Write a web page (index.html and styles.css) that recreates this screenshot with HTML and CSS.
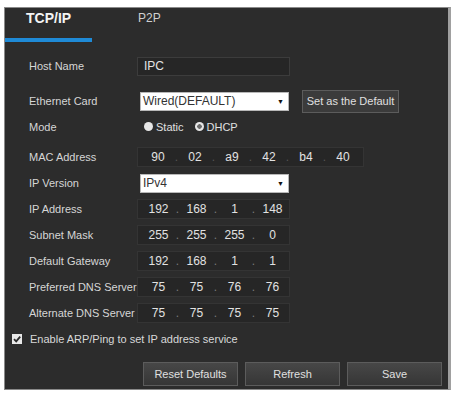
FILE: index.html
```html
<!DOCTYPE html>
<html lang="en">
<head>
    <meta charset="UTF-8">
    <meta name="viewport" content="width=device-width, initial-scale=1.0">
    <title>TCP/IP Settings</title>
    <link rel="stylesheet" href="styles.css">
</head>
<body>
    <div class="panel">
        <div class="tabs">
            <div class="tab active">TCP/IP</div>
            <div class="tab">P2P</div>
        </div>

        <div class="form">
            <div class="row host-row">
                <div class="label">Host Name</div>
                <div class="text-field">IPC</div>
            </div>
            <div class="row eth-row">
                <div class="label">Ethernet Card</div>
                <div class="select"><span>Wired(DEFAULT)</span><span class="arrow">&#9660;</span></div>
                <button class="btn default-btn">Set as the Default</button>
            </div>
            <div class="row mode-row">
                <div class="label">Mode</div>
                <label class="radio-item"><span class="radio"></span>Static</label>
                <label class="radio-item"><span class="radio on"></span>DHCP</label>
            </div>
            <div class="row mac-row">
                <div class="label">MAC Address</div>
                <div class="ip-field mac">
                    <span class="oct">90</span><span class="dot">.</span>
                    <span class="oct">02</span><span class="dot">.</span>
                    <span class="oct">a9</span><span class="dot">.</span>
                    <span class="oct">42</span><span class="dot">.</span>
                    <span class="oct">b4</span><span class="dot">.</span>
                    <span class="oct">40</span>
                </div>
            </div>
            <div class="row">
                <div class="label">IP Version</div>
                <div class="select"><span>IPv4</span><span class="arrow">&#9660;</span></div>
            </div>
            <div class="row">
                <div class="label">IP Address</div>
                <div class="ip-field">
                    <span class="oct">192</span><span class="dot">.</span>
                    <span class="oct">168</span><span class="dot">.</span>
                    <span class="oct">1</span><span class="dot">.</span>
                    <span class="oct">148</span>
                </div>
            </div>
            <div class="row">
                <div class="label">Subnet Mask</div>
                <div class="ip-field">
                    <span class="oct">255</span><span class="dot">.</span>
                    <span class="oct">255</span><span class="dot">.</span>
                    <span class="oct">255</span><span class="dot">.</span>
                    <span class="oct">0</span>
                </div>
            </div>
            <div class="row">
                <div class="label">Default Gateway</div>
                <div class="ip-field">
                    <span class="oct">192</span><span class="dot">.</span>
                    <span class="oct">168</span><span class="dot">.</span>
                    <span class="oct">1</span><span class="dot">.</span>
                    <span class="oct">1</span>
                </div>
            </div>
            <div class="row">
                <div class="label">Preferred DNS Server</div>
                <div class="ip-field">
                    <span class="oct">75</span><span class="dot">.</span>
                    <span class="oct">75</span><span class="dot">.</span>
                    <span class="oct">76</span><span class="dot">.</span>
                    <span class="oct">76</span>
                </div>
            </div>
            <div class="row">
                <div class="label">Alternate DNS Server</div>
                <div class="ip-field">
                    <span class="oct">75</span><span class="dot">.</span>
                    <span class="oct">75</span><span class="dot">.</span>
                    <span class="oct">75</span><span class="dot">.</span>
                    <span class="oct">75</span>
                </div>
            </div>
            <div class="row check-row">
                <span class="checkbox">
                    <svg width="10" height="10" viewBox="0 0 10 10"><path d="M2 5.2 L4.2 7.4 L8.2 2.6" fill="none" stroke="#2b2b2b" stroke-width="1.8"/></svg>
                </span>
                <span class="check-text">Enable ARP/Ping to set IP address service</span>
            </div>
        </div>

        <div class="actions">
            <button class="btn">Reset Defaults</button>
            <button class="btn">Refresh</button>
            <button class="btn">Save</button>
        </div>
    </div>
</body>
</html>
```

FILE: styles.css
```css
body {
    margin: 0;
    padding: 7px 0 0 4px;
    background-color: #ffffff;
    font-family: "Liberation Sans", Arial, sans-serif;
}

.panel {
    width: 443px;
    height: 381px;
    background-color: #2c2c2c;
    border: 1px solid #8a8a8a;
    border-right: 3px solid #a0a0a0;
    color: #dcdcdc;
    font-size: 11px;
}

.tabs {
    display: flex;
    height: 34px;
}

.tab {
    padding-top: 2px;
    font-size: 12px;
    line-height: 16px;
    color: #d0d0d0;
    padding-left: 46px;
}

.tab.active {
    padding-left: 21px;
    font-size: 14px;
    font-weight: bold;
    color: #f4f4f4;
    border-bottom: 4px solid #1f8ad6;
    box-sizing: border-box;
    height: 34px;
    width: 87px;
}

.form {
    padding-top: 11px;
}

.row {
    display: flex;
    align-items: center;
    height: 26px;
    padding-left: 24px;
}

.eth-row {
    margin-top: 9px;
}

.mode-row {
    height: 25px;
}

.mac-row {
    margin-top: 5px;
}

.label {
    width: 108px;
    flex-shrink: 0;
    white-space: nowrap;
    color: #d6d6d6;
}

.text-field {
    width: 145px;
    height: 17px;
    line-height: 17px;
    padding-left: 6px;
    background-color: #262626;
    border: 1px solid #3c3c3c;
    font-size: 12px;
    color: #e4e4e4;
}

.select {
    display: flex;
    justify-content: space-between;
    align-items: center;
    width: 141px;
    height: 17px;
    margin-left: 3px;
    padding: 0 4px 0 2px;
    background-color: #ffffff;
    border: 1px solid #b8b8b8;
    color: #333333;
    font-size: 12px;
}

.select .arrow {
    font-size: 7px;
    color: #111111;
}

.btn {
    height: 24px;
    background: linear-gradient(#474747, #363636);
    border: 1px solid #5c5c5c;
    color: #e0e0e0;
    font-family: "Liberation Sans", Arial, sans-serif;
    font-size: 11px;
    padding: 0;
}

.default-btn {
    width: 97px;
    height: 23px;
    margin-left: 13px;
    background: #3b3b3b;
}

.radio-item {
    display: flex;
    align-items: center;
    margin-left: 7px;
    margin-right: 5px;
    color: #e0e0e0;
}

.radio-item + .radio-item {
    margin-left: 6px;
}

.radio {
    display: inline-block;
    width: 9px;
    height: 9px;
    border-radius: 50%;
    background-color: #e6e6e6;
    margin-right: 3px;
}

.radio.on {
    background: radial-gradient(circle, #6a6a6a 0 2px, #e6e6e6 2.5px);
}

.ip-field {
    display: flex;
    align-items: center;
    height: 18px;
    padding-left: 4px;
    background-color: #262626;
    border: 1px solid #343434;
    font-size: 12px;
    color: #e2e2e2;
}

.ip-field.mac {
    padding-right: 4px;
}

.oct {
    width: 33px;
    text-align: center;
}

.dot {
    width: 5px;
    text-align: center;
    color: #7a7a7a;
}

.mac .oct {
    width: 32px;
}

.mac .dot {
    color: #555555;
}

.check-row {
    padding-left: 7px;
}

.checkbox {
    display: flex;
    align-items: center;
    justify-content: center;
    width: 10px;
    height: 10px;
    background-color: #e8e8e8;
    margin-right: 8px;
}

.check-text {
    color: #d8d8d8;
}

.actions {
    display: flex;
    gap: 7px;
    padding-left: 138px;
    margin-top: 10px;
}

.actions .btn {
    width: 95px;
}
```
